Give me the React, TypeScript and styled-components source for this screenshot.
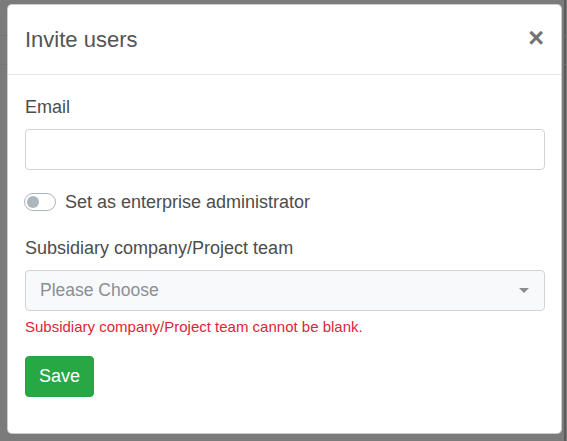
import styled, { createGlobalStyle } from 'styled-components'

const GlobalStyle = createGlobalStyle`
  html, body {
    margin: 0;
    padding: 0;
    background: #7b7b7b;
  }
  body {
    font-family: "Liberation Sans", Arial, Helvetica, sans-serif;
    -webkit-font-smoothing: antialiased;
  }
  * {
    box-sizing: border-box;
  }
`

// dimmed page behind the modal (table rows show through the overlay)
const Backdrop = styled.div`
  min-height: 441px;
  padding: 4px 0 8px 7px;
  background:
    linear-gradient(#727272, #727272) 0 35px / 100% 1px no-repeat,
    linear-gradient(#747474, #747474) 0 64px / 100% 1px no-repeat,
    linear-gradient(#5c5c5c, #5c5c5c) 564px 0 / 2px 100% no-repeat,
    #7b7b7b;
`

const Modal = styled.div`
  width: 555px;
  background: #fff;
  border: 1px solid rgba(0, 0, 0, 0.2);
  border-radius: 5px;
  overflow: hidden;
`

const Header = styled.div`
  display: flex;
  align-items: center;
  justify-content: space-between;
  padding: 18px 17px 18px 17px;
  border-bottom: 1px solid #e4e7ea;
`

const Title = styled.h5`
  margin: 0;
  font-size: 22px;
  line-height: 33px;
  font-weight: 400;
  color: #545454;
`

const CloseButton = styled.button`
  border: 0;
  background: none;
  padding: 0;
  margin-top: -2px;
  font-family: "Liberation Sans", Arial, sans-serif;
  font-size: 27px;
  font-weight: 700;
  line-height: 1;
  color: #727272;
  cursor: pointer;
`

const Body = styled.div`
  padding: 19px 16px 36px 17px;
`

const FormGroup = styled.div<{ $gap?: number }>`
  margin-bottom: ${(p) => p.$gap ?? 19}px;
`

const Label = styled.label`
  display: block;
  margin-bottom: 9px;
  font-size: 18px;
  line-height: 26px;
  color: #4c4c4c;
`

const TextInput = styled.input`
  display: block;
  width: 100%;
  height: 41px;
  padding: 0 15px;
  border: 1px solid #ced4da;
  border-radius: 4px;
  background: #fff;
  font-family: inherit;
  font-size: 17.5px;
  color: #495057;
  outline: none;
`

const SwitchRow = styled.label`
  display: flex;
  align-items: center;
  gap: 9px;
  height: 26px;
  font-size: 18px;
  color: #4c4c4c;
  cursor: pointer;
`

const SwitchTrack = styled.span<{ $on?: boolean }>`
  position: relative;
  width: 32px;
  height: 18px;
  margin-left: -1px;
  border: 1px solid ${(p) => (p.$on ? '#28a745' : '#adb5bd')};
  border-radius: 9px;
  background: ${(p) => (p.$on ? '#28a745' : '#fff')};

  &::after {
    content: '';
    position: absolute;
    top: 2px;
    left: ${(p) => (p.$on ? '16px' : '2px')};
    width: 12px;
    height: 12px;
    border-radius: 50%;
    background: ${(p) => (p.$on ? '#fff' : '#adb5bd')};
  }
`

const SelectBox = styled.div`
  display: flex;
  align-items: center;
  justify-content: space-between;
  height: 41px;
  padding: 0 15px 0 14px;
  border: 1px solid #ced4da;
  border-radius: 4px;
  background: #f8f9fa;
  cursor: pointer;
`

const Placeholder = styled.span`
  font-size: 17.5px;
  color: #8a8f94;
`

const Caret = styled.span`
  width: 0;
  height: 0;
  border-left: 5px solid transparent;
  border-right: 5px solid transparent;
  border-top: 5px solid #8c8c8c;
`

const ErrorText = styled.div`
  margin-top: 5px;
  font-size: 15px;
  line-height: 22px;
  color: #e0243a;
`

const SaveButton = styled.button`
  height: 41px;
  padding: 0 13px;
  border: 1px solid #25a243;
  border-radius: 4px;
  background: #28a745;
  font-family: inherit;
  font-size: 18px;
  color: #fff;
  cursor: pointer;
`

export default function App() {
  return (
    <>
      <GlobalStyle />
      <Backdrop>
        <Modal>
          <Header>
            <Title>Invite users</Title>
            <CloseButton aria-label="Close">×</CloseButton>
          </Header>
          <Body>
            <FormGroup>
              <Label htmlFor="email">Email</Label>
              <TextInput id="email" type="email" />
            </FormGroup>
            <FormGroup $gap={20}>
              <SwitchRow>
                <SwitchTrack />
                Set as enterprise administrator
              </SwitchRow>
            </FormGroup>
            <FormGroup $gap={18}>
              <Label>Subsidiary company/Project team</Label>
              <SelectBox>
                <Placeholder>Please Choose</Placeholder>
                <Caret />
              </SelectBox>
              <ErrorText>Subsidiary company/Project team cannot be blank.</ErrorText>
            </FormGroup>
            <SaveButton>Save</SaveButton>
          </Body>
        </Modal>
      </Backdrop>
    </>
  )
}
